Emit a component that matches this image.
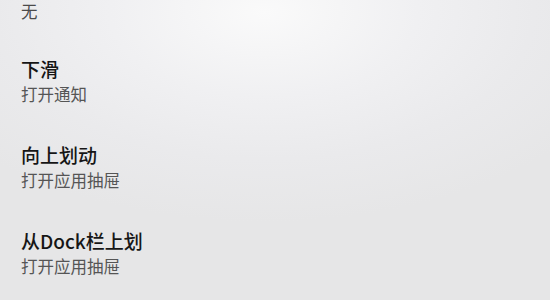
const items = [
  { title: "下滑", sub: "打开通知" },
  { title: "向上划动", sub: "打开应用抽屉" },
  { title: "从Dock栏上划", sub: "打开应用抽屉" },
];

export default function App() {
  return (
    <div
      className="h-[300px] w-[550px] overflow-hidden bg-[radial-gradient(ellipse_70%_70%_at_48%_4%,#fafafa_0%,#f0f0f2_40%,#eaeaec_70%,#e6e6e7_100%)] pl-[21px]"
      style={{ fontFamily: '"Noto Sans CJK SC", "Noto Sans", sans-serif' }}
    >
      <div className="text-[16.5px] leading-[22px] text-[#4a4a4a]">无</div>
      <div className="mt-[16px]">
        {items.map((it) => (
          <div key={it.title + it.sub} className="py-[18px]">
            <div className="text-[19px] font-medium leading-[26px] text-[#161616]">
              {it.title}
            </div>
            <div className="text-[16.5px] leading-6 text-[#555555]">{it.sub}</div>
          </div>
        ))}
      </div>
    </div>
  );
}
